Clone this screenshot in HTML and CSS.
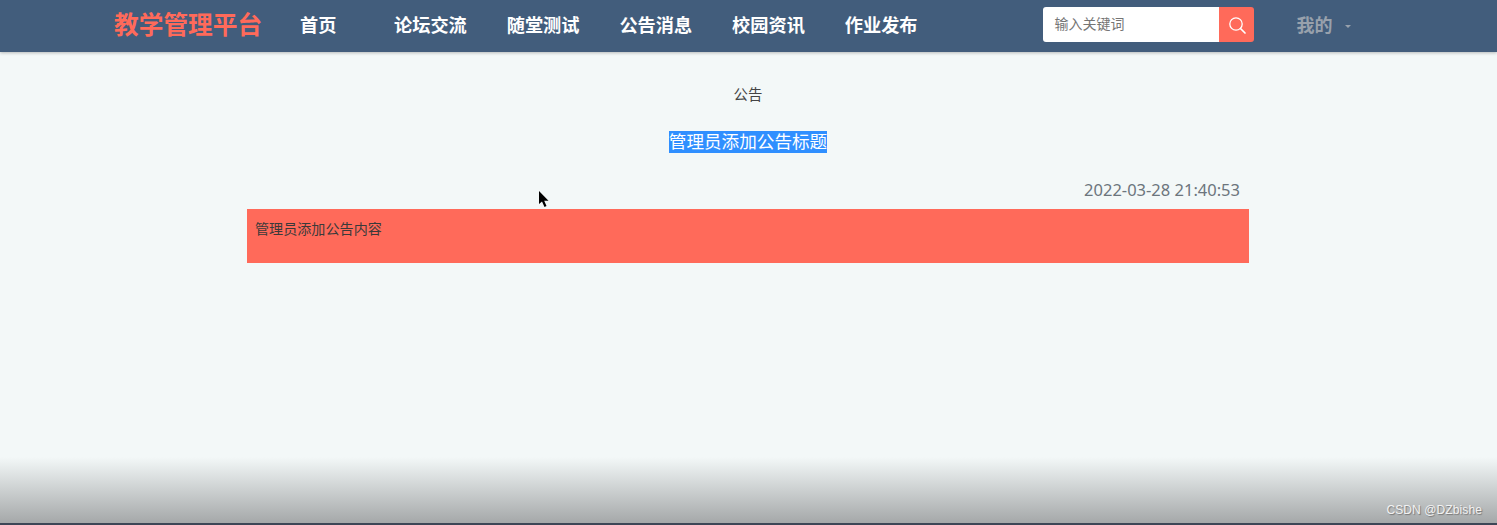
FILE: index.html
```html
<!DOCTYPE html>
<html lang="zh">
<head>
  <meta charset="UTF-8">
  <title>公告</title>
  <link rel="stylesheet" href="styles.css">
</head>
<body>

  <div class="nav">
    <div class="logo">教学管理平台</div>
    <a class="nav-item home">首页</a>
    <a class="nav-item">论坛交流</a>
    <a class="nav-item">随堂测试</a>
    <a class="nav-item">公告消息</a>
    <a class="nav-item">校园资讯</a>
    <a class="nav-item">作业发布</a>
    <div class="search">
      <div class="search-input">输入关键词</div>
      <div class="search-btn">
        <svg width="18" height="18" viewBox="0 0 18 18" fill="none" stroke="#fff" stroke-width="1.3" stroke-linecap="round">
          <circle cx="8" cy="8" r="6.2"/>
          <path d="M12.5 12.5L17 17" stroke-width="1.7"/>
        </svg>
      </div>
    </div>
    <div class="mine">我的</div>
    <div class="caret"></div>
  </div>

  <div class="main">
    <div class="crumb">公告</div>
    <div class="title"><span class="selected">管理员添加公告标题</span></div>
    <div class="time">2022-03-28 21:40:53</div>
    <div class="content">管理员添加公告内容</div>
  </div>

  <svg class="cursor" width="12" height="18" viewBox="0 0 12 18">
    <path d="M1 1V14L4 11.5L6.5 17L8.5 16L6.2 10.8H10.5Z" fill="#000"/>
  </svg>

  <div class="fade"></div>
  <div class="watermark">CSDN @DZbishe</div>

</body>
</html>
```

FILE: styles.css
```css
html, body {
  height: 100%;
}

body {
  margin: 0;
  height: 525px;
  overflow: hidden;
  position: relative;
  background: #f3f8f8;
  font-family: "Liberation Sans", "Noto Sans CJK SC", sans-serif;
  display: flex;
  flex-direction: column;
}

.nav {
  height: 52px;
  flex-shrink: 0;
  background: #425d7c;
  box-shadow: 0 1px 3px rgba(0,0,0,0.25);
  display: flex;
  align-items: center;
  padding-left: 114px;
  padding-bottom: 3px;
  box-sizing: border-box;
}

.logo {
  width: 186px;
  margin-bottom: 3px;
  font-size: 24.7px;
  font-weight: bold;
  color: #ff6a5a;
  white-space: nowrap;
}

.nav-item {
  width: 73px;
  margin-right: 39.7px;
  margin-bottom: 2px;
  font-size: 18.2px;
  font-weight: bold;
  color: #fff;
  white-space: nowrap;
}

.nav-item.home {
  width: 36px;
  margin-right: 58px;
}

.search {
  display: flex;
  height: 35px;
  margin-left: 86px;
  border-radius: 3px;
  overflow: hidden;
}

.search-input {
  width: 165px;
  padding-left: 11px;
  background: #fff;
  color: #757575;
  font-size: 14px;
  line-height: 35px;
}

.search-btn {
  width: 35px;
  background: #ff6a5a;
  display: flex;
  align-items: center;
  justify-content: center;
}

.mine {
  margin-left: 42px;
  margin-bottom: 2px;
  font-size: 18px;
  font-weight: bold;
  color: #98a1ac;
}

.caret {
  margin-left: 13px;
  margin-top: 3px;
  border-left: 3px solid transparent;
  border-right: 3px solid transparent;
  border-top: 3px solid #98a1ac;
}

.main {
  width: 1002px;
  margin-left: 247px;
}

.crumb {
  margin-top: 33px;
  text-align: center;
  font-size: 14.4px;
  line-height: 20px;
  color: #444;
}

.title {
  margin-top: 26px;
  text-align: center;
  font-size: 17.6px;
  line-height: 23px;
}

.selected {
  padding: 1px 0;
  background: #2f8fff;
  color: #fff;
}

.time {
  margin-top: 24px;
  padding-right: 9px;
  text-align: right;
  font-family: "Noto Sans", sans-serif;
  font-size: 16.5px;
  line-height: 24px;
  color: #6c757d;
}

.content {
  margin-top: 7px;
  height: 54px;
  padding: 10px 8px 0;
  box-sizing: border-box;
  background: #ff6a5a;
  font-size: 14.1px;
  line-height: 20px;
  color: #3a3a3a;
}

.cursor {
  position: absolute;
  left: 538px;
  top: 190px;
}

.fade {
  position: absolute;
  left: 0;
  right: 0;
  bottom: 0;
  height: 68px;
  background: linear-gradient(to bottom, rgba(243,248,248,0), #a5a8a9);
  border-bottom: 2px solid #3d4656;
  box-sizing: border-box;
}

.watermark {
  position: absolute;
  right: 15px;
  bottom: 8px;
  font-size: 12px;
  letter-spacing: 0.1px;
  color: #f2f2f2;
  text-shadow: 1px 1px 1px #777;
}
```
